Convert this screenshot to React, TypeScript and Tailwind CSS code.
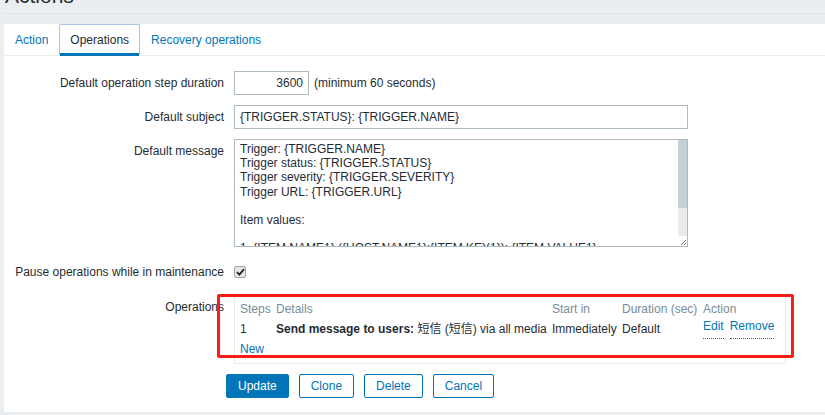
import type { ReactNode } from "react"

const messageLines = [
  "Trigger: {TRIGGER.NAME}",
  "Trigger status: {TRIGGER.STATUS}",
  "Trigger severity: {TRIGGER.SEVERITY}",
  "Trigger URL: {TRIGGER.URL}",
  "",
  "Item values:",
  "",
  "1. {ITEM.NAME1} ({HOST.NAME1}:{ITEM.KEY1}): {ITEM.VALUE1}",
]

function FormRow({ label, children, className = "" }: { label: string; children: ReactNode; className?: string }) {
  return (
    <div className={`flex items-start ${className}`}>
      <div className="w-[220px] shrink-0 text-right leading-[24px] whitespace-nowrap">{label}</div>
      <div className="ml-[10px]">{children}</div>
    </div>
  )
}

export default function App() {
  return (
    <div className="flex h-[415px] flex-col overflow-hidden bg-[#ebeef0] pl-[4px] font-['Liberation_Sans','Noto_Sans_CJK_SC',sans-serif] text-[12px] text-[#1f2c33]">
      {/* Header */}
      <div className="flex h-[14px] shrink-0 flex-col border-b border-[#dde3e6]">
        <h1 className="-mt-[16px] ml-[1px] text-[21px] leading-[24px] font-normal text-[#1f2c33]">Actions</h1>
      </div>

      {/* Panel */}
      <div className="mt-[10px] shrink-0 bg-white pb-[14px]">
        {/* Tabs */}
        <div className="flex h-[32px] border-b border-[#ebeef0]">
          <div className="flex h-[31px] items-center border border-transparent px-[10px] text-[#0275b8]">Action</div>
          <div className="relative flex h-[31px] items-center rounded-t-[2px] border border-b-0 border-[#a6c5ee] px-[10px] text-[#1f2c33]">
            Operations
            <div className="absolute bottom-[-1px] left-0 right-0 h-[3px] bg-[#0275b8]" />
          </div>
          <div className="flex h-[31px] items-center border border-transparent px-[10px] text-[#0275b8]">Recovery operations</div>
        </div>

        {/* Form */}
        <div className="pt-[15px]">
          <FormRow label="Default operation step duration">
            <div className="flex items-center">
              <div className="h-[24px] w-[75px] border border-[#acbbc2] pr-[5px] text-right leading-[22px]">3600</div>
              <span className="ml-[5px]">(minimum 60 seconds)</span>
            </div>
          </FormRow>

          <FormRow label="Default subject" className="mt-[10px]">
            <div className="h-[24px] w-[454px] border border-[#acbbc2] px-[5px] leading-[22px]">
              {"{TRIGGER.STATUS}: {TRIGGER.NAME}"}
            </div>
          </FormRow>

          <FormRow label="Default message" className="mt-[10px]">
            <div className="flex h-[108px] w-[454px] overflow-hidden border border-[#acbbc2]">
              <div className="flex-1 overflow-hidden whitespace-pre pl-[5px] pt-[2px] leading-[14.2px]">
                {messageLines.join("\n")}
              </div>
              <div className="flex w-[9px] flex-col">
                <div className="h-[68px] bg-[#c6d0d7]" />
                <div className="flex-1 bg-[#ebebeb]" />
                <div className="flex h-[10px] items-end justify-end bg-white">
                  <svg width="7" height="7" viewBox="0 0 7 7">
                    <path d="M6 1 L1 6 M6 4 L4 6" stroke="#777" strokeWidth="1" />
                  </svg>
                </div>
              </div>
            </div>
          </FormRow>

          <FormRow label="Pause operations while in maintenance" className="mt-[13px]">
            <div className="flex h-[24px] items-center">
              <div className="flex h-[12px] w-[12px] items-center justify-center rounded-[2px] border border-[#9ea4a8] bg-[#e4e6e8]">
                <svg width="9" height="8" viewBox="0 0 9 8">
                  <path d="M1 4.2 L3.4 6.6 L8 1.2" fill="none" stroke="#222" strokeWidth="1.8" />
                </svg>
              </div>
            </div>
          </FormRow>

          <div className="relative mt-[11px]">
            <FormRow label="Operations">
              <div className="w-[552px] border border-[#e8ebed] px-[5px] pb-[4px] pt-[3px] leading-[20px]">
                <div className="grid grid-cols-[36px_276px_70px_81px_1fr] text-[#768d99]">
                  <div>Steps</div>
                  <div>Details</div>
                  <div>Start in</div>
                  <div>Duration (sec)</div>
                  <div>Action</div>
                </div>
                <div className="grid grid-cols-[36px_276px_70px_81px_1fr] whitespace-nowrap">
                  <div>1</div>
                  <div>
                    <span className="font-bold">Send message to users:</span> 短信 (短信) via all media
                  </div>
                  <div>Immediately</div>
                  <div>Default</div>
                  <div className="flex gap-[6px] text-[#0275b8]">
                    <span className="border-b border-dotted border-[#0275b8] leading-[14px]">Edit</span>
                    <span className="border-b border-dotted border-[#0275b8] leading-[14px]">Remove</span>
                  </div>
                </div>
                <div className="text-[#0275b8]">New</div>
              </div>
            </FormRow>
            {/* annotation box */}
            <div className="pointer-events-none absolute left-[213px] top-[-1px] h-[64px] w-[577px] rounded-[2px] border-[3px] border-[#fa1d16]" />
          </div>

          {/* Buttons */}
          <div className="ml-[222px] mt-[10px] flex gap-[10px]">
            <button className="h-[24px] rounded-[2px] border border-[#0275b8] bg-[#0275b8] px-[11px] text-white">Update</button>
            <button className="h-[24px] rounded-[2px] border border-[#0275b8] bg-white px-[11px] text-[#0275b8]">Clone</button>
            <button className="h-[24px] rounded-[2px] border border-[#0275b8] bg-white px-[11px] text-[#0275b8]">Delete</button>
            <button className="h-[24px] rounded-[2px] border border-[#0275b8] bg-white px-[11px] text-[#0275b8]">Cancel</button>
          </div>
        </div>
      </div>
    </div>
  )
}
